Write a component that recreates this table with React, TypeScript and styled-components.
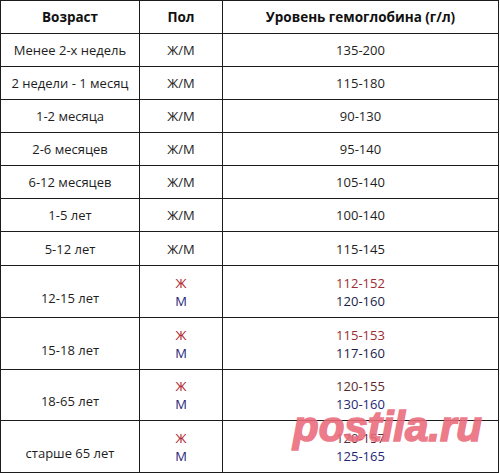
import React from "react";
import styled, { createGlobalStyle } from "styled-components";

const Global = createGlobalStyle`
  html, body { margin: 0; padding: 0; background: #fff; }
  body { font-family: "Open Sans", "Liberation Sans", sans-serif; }
`;

const Page = styled.div`
  position: relative;
  width: 500px;
  height: 473px;
  background: #fff;
  overflow: hidden;
`;

const Table = styled.div`
  display: grid;
  grid-template-columns: 138px 82px 275px;
  gap: 1px;
  padding: 1px;
  width: max-content;
  background: #1c1c1c;
`;

const Cell = styled.div<{ $h: number; $head?: boolean; $low?: boolean }>`
  background: #fff;
  height: ${(p) => p.$h}px;
  display: flex;
  flex-direction: column;
  align-items: center;
  justify-content: center;
  padding-top: ${(p) => (p.$low ? 12 : 0)}px;
  box-sizing: border-box;
  font-size: ${(p) => (p.$head ? 13.5 : 13)}px;
  font-weight: ${(p) => (p.$head ? 700 : 400)};
  color: ${(p) => (p.$head ? "#111" : "#1e1e1e")};
  line-height: 18px;
  white-space: nowrap;
`;

const Line = styled.span<{ $c: string }>`
  display: block;
  color: ${(p) => p.$c};
`;

const Watermark = styled.div`
  position: absolute;
  left: 293px;
  top: 406px;
  font-family: "Liberation Sans", Arial, sans-serif;
  font-style: italic;
  font-weight: 700;
  font-size: 42px;
  line-height: 42px;
  letter-spacing: 0px;
  color: #ea6a7b;
  -webkit-text-stroke: 1.6px #ea6a7b;
  opacity: 0.88;
  pointer-events: none;
`;

const RED = "#b0232b";
const NAVY = "#1f2676";
const VRED = "#9c2c34";
const VNAVY = "#1a1d4a";

type Row =
  | { age: string; val: string; h: number }
  | { age: string; f: string; m: string; fc: string; mc: string; h: number };

const rows: Row[] = [
  { age: "Менее 2-х недель", val: "135-200", h: 32 },
  { age: "2 недели - 1 месяц", val: "115-180", h: 32 },
  { age: "1-2 месяца", val: "90-130", h: 32 },
  { age: "2-6 месяцев", val: "95-140", h: 32 },
  { age: "6-12 месяцев", val: "105-140", h: 32 },
  { age: "1-5 лет", val: "100-140", h: 32 },
  { age: "5-12 лет", val: "115-145", h: 33 },
  { age: "12-15 лет", f: "112-152", m: "120-160", fc: VRED, mc: VNAVY, h: 51 },
  { age: "15-18 лет", f: "115-153", m: "117-160", fc: VRED, mc: VNAVY, h: 51 },
  { age: "18-65 лет", f: "120-155", m: "130-160", fc: "#5a2a2a", mc: NAVY, h: 50 },
  { age: "старше 65 лет", f: "120-157", m: "125-165", fc: "#5a2a3a", mc: NAVY, h: 51 },
];

export default function App() {
  return (
    <Page>
      <Global />
      <Table>
        <Cell $h={32} $head>Возраст</Cell>
        <Cell $h={32} $head>Пол</Cell>
        <Cell $h={32} $head>Уровень гемоглобина (г/л)</Cell>
        {rows.map((r) =>
          "val" in r ? (
            <React.Fragment key={r.age}>
              <Cell $h={r.h}>{r.age}</Cell>
              <Cell $h={r.h}>Ж/М</Cell>
              <Cell $h={r.h}>{r.val}</Cell>
            </React.Fragment>
          ) : (
            <React.Fragment key={r.age}>
              <Cell $h={r.h} $low>{r.age}</Cell>
              <Cell $h={r.h}>
                <Line $c={RED}>Ж</Line>
                <Line $c={NAVY}>М</Line>
              </Cell>
              <Cell $h={r.h}>
                <Line $c={r.fc}>{r.f}</Line>
                <Line $c={r.mc}>{r.m}</Line>
              </Cell>
            </React.Fragment>
          )
        )}
      </Table>
      <Watermark>postila.ru</Watermark>
    </Page>
  );
}
